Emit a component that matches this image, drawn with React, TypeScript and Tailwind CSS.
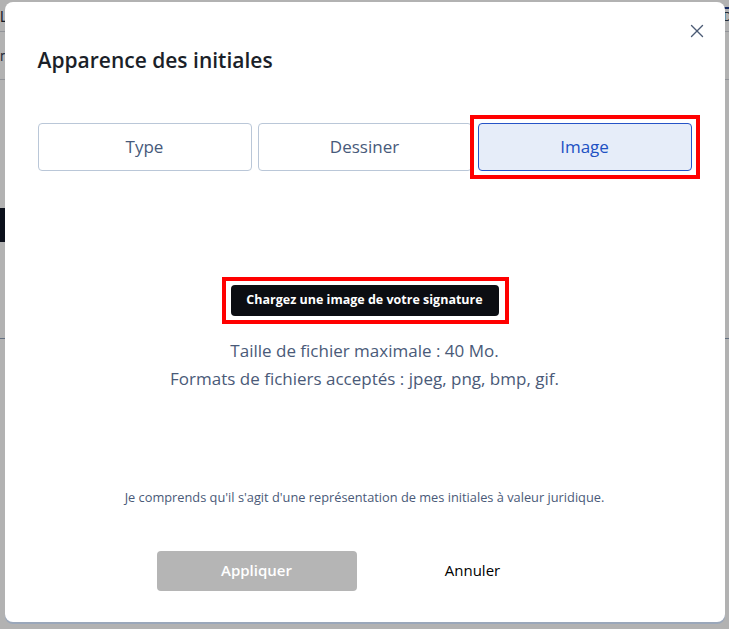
import { X } from 'lucide-react'

const tabs = ['Type', 'Dessiner', 'Image']

function BackgroundPage() {
  // the page behind the dimmed overlay; only its edges show
  return (
    <div className="h-[629px] w-full bg-white" style={{ fontFamily: 'Inter, sans-serif' }}>
      <div className="flex h-[32px] items-end justify-between border-b border-gray-300">
        <span className="pb-1 text-sm text-gray-800">Le</span>
        <div className="mr-[-40px] h-[24px] w-[86px] border-t-2 border-[#1e3a8a] pl-10 text-xs text-gray-700">Dé</div>
      </div>
      <div className="flex h-[48px] items-center border-b border-gray-300 text-sm text-gray-700">r</div>
      <div className="mt-[128px] h-[34px] w-[60px] bg-gray-900" />
      <div className="mt-[96px] border-b border-slate-400" />
    </div>
  )
}

export default function App() {
  const active = 'Image'

  return (
    <div className="relative h-[629px] w-[729px] overflow-hidden" style={{ fontFamily: '"Open Sans", sans-serif' }}>
      <BackgroundPage />

      <div className="absolute inset-0 flex items-start justify-center bg-black/30 pt-[2px]">
        <div className="relative flex h-[620px] w-[720px] flex-col rounded-lg bg-white px-[33px] shadow-[0_2px_0_#9aa7ba]">
          <button className="absolute right-[17px] top-[18px] text-[#4b5b75]">
            <X className="h-[22px] w-[22px]" strokeWidth={1.5} />
          </button>

          <h2 className="mt-[43px] text-[21px] font-semibold text-[#1b1f29]">Apparence des initiales</h2>

          <div className="mt-[46px] grid grid-cols-3 gap-[6px]">
            {tabs.map((t) =>
              t === active ? (
                <div key={t} className="relative">
                  <button className="h-[48px] w-full rounded border border-[#2554c7] bg-[#e6edf9] text-[17px] font-medium text-[#2051c3]">
                    {t}
                  </button>
                  <div className="pointer-events-none absolute -inset-[8px] border-4 border-[#ff0000]" />
                </div>
              ) : (
                <button
                  key={t}
                  className="h-[48px] rounded border border-[#bac7d8] bg-white text-[17px] font-medium text-[#475a7a]"
                >
                  {t}
                </button>
              )
            )}
          </div>

          <div className="mt-[114px] flex justify-center">
            <div className="relative">
              <button className="h-[31px] w-[268px] rounded bg-[#0b0d12] text-[12.5px] font-bold text-white">
                Chargez une image de votre signature
              </button>
              <div className="pointer-events-none absolute -left-[9px] -right-[10px] -top-[8px] -bottom-[8px] border-4 border-[#ff0000]" />
            </div>
          </div>

          <div className="mt-[21px] text-center text-[17px] leading-[28px] text-[#4a5a78]">
            <p>Taille de fichier maximale : 40 Mo.</p>
            <p>Formats de fichiers acceptés : jpeg, png, bmp, gif.</p>
          </div>

          <p className="mt-[95px] text-center text-[12.8px] text-[#4a5a78]">
            Je comprends qu'il s'agit d'une représentation de mes initiales à valeur juridique.
          </p>

          <div className="mt-[44px] flex justify-center gap-4">
            <button className="h-[40px] w-[200px] rounded bg-[#b5b5b5] text-[15px] font-semibold text-white">
              Appliquer
            </button>
            <button className="h-[40px] w-[200px] rounded text-[15px] font-medium text-black">Annuler</button>
          </div>
        </div>
      </div>
    </div>
  )
}
